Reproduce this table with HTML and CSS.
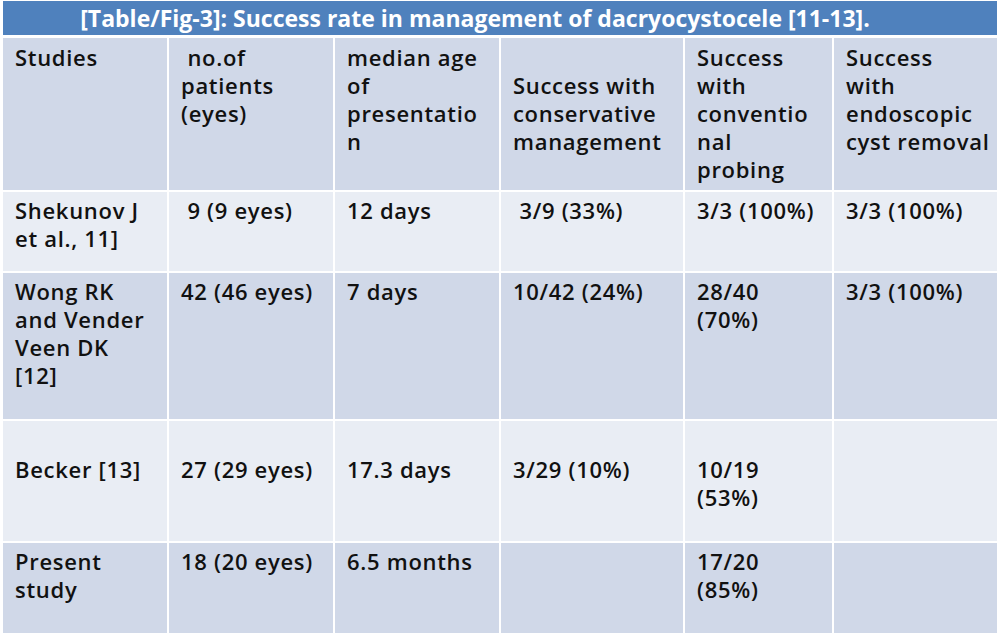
FILE: index.html
```html
<!DOCTYPE html>
<html lang="en">
<head>
<meta charset="utf-8">
<title>Table/Fig-3</title>
<link rel="stylesheet" href="styles.css">
</head>
<body>
<div class="page">
  <div class="title">[Table/Fig-3]: Success rate in management of dacryocystocele [11-13].</div>
  <div class="grid">
    <div class="cell hd">Studies</div>
    <div class="cell hd">&nbsp;no.of<br>patients<br>(eyes)</div>
    <div class="cell hd">median age<br>of<br>presentatio<br>n</div>
    <div class="cell hd drop">Success with<br>conservative<br>management</div>
    <div class="cell hd">Success<br>with<br>conventio<br>nal<br>probing</div>
    <div class="cell hd">Success<br>with<br>endoscopic<br>cyst removal</div>

    <div class="cell lt">Shekunov J<br>et al., 11]</div>
    <div class="cell lt">&nbsp;9 (9 eyes)</div>
    <div class="cell lt">12 days</div>
    <div class="cell lt">&nbsp;3/9 (33%)</div>
    <div class="cell lt">3/3 (100%)</div>
    <div class="cell lt">3/3 (100%)</div>

    <div class="cell dk">Wong RK<br>and Vender<br>Veen DK<br>[12]</div>
    <div class="cell dk">42 (46 eyes)</div>
    <div class="cell dk">7 days</div>
    <div class="cell dk">10/42 (24%)</div>
    <div class="cell dk">28/40<br>(70%)</div>
    <div class="cell dk">3/3 (100%)</div>

    <div class="cell lt drop">Becker [13]</div>
    <div class="cell lt drop">27 (29 eyes)</div>
    <div class="cell lt drop">17.3 days</div>
    <div class="cell lt drop">3/29 (10%)</div>
    <div class="cell lt drop">10/19<br>(53%)</div>
    <div class="cell lt drop"></div>

    <div class="cell dk">Present<br>study</div>
    <div class="cell dk">18 (20 eyes)</div>
    <div class="cell dk">6.5 months</div>
    <div class="cell dk"></div>
    <div class="cell dk">17/20<br>(85%)</div>
    <div class="cell dk"></div>
  </div>
</div>
</body>
</html>
```

FILE: styles.css
```css
html, body {
  margin: 0;
  padding: 0;
  background: #ffffff;
}

.page {
  width: 1000px;
  height: 633px;
  overflow: hidden;
  padding: 1px 3px 0 3px;
  box-sizing: border-box;
  font-family: "Open Sans", "Liberation Sans", sans-serif;
  color: #111111;
}

.title {
  height: 34px;
  background: #4f81bd;
  color: #ffffff;
  font-weight: 700;
  font-size: 23px;
  line-height: 34px;
  text-align: center;
  padding-right: 50px;
  white-space: nowrap;
}

.grid {
  margin-top: 3px;
  display: grid;
  grid-template-columns: 164px 164px 164px 182px 147px 163px;
  grid-template-rows: 152px 79px 146px 120px 92px;
  gap: 2px;
}

.cell {
  font-size: 22px;
  font-weight: 600;
  letter-spacing: 0.7px;
  line-height: 28px;
  padding: 4px 2px 0 12px;
  white-space: nowrap;
  overflow: hidden;
}

.hd {
  background: #d0d8e8;
  padding-top: 5px;
}

.lt {
  background: #e9edf4;
}

.dk {
  background: #d0d8e8;
}

.hd.drop {
  padding-top: 33px;
}

.lt.drop {
  padding-top: 34px;
}
```
